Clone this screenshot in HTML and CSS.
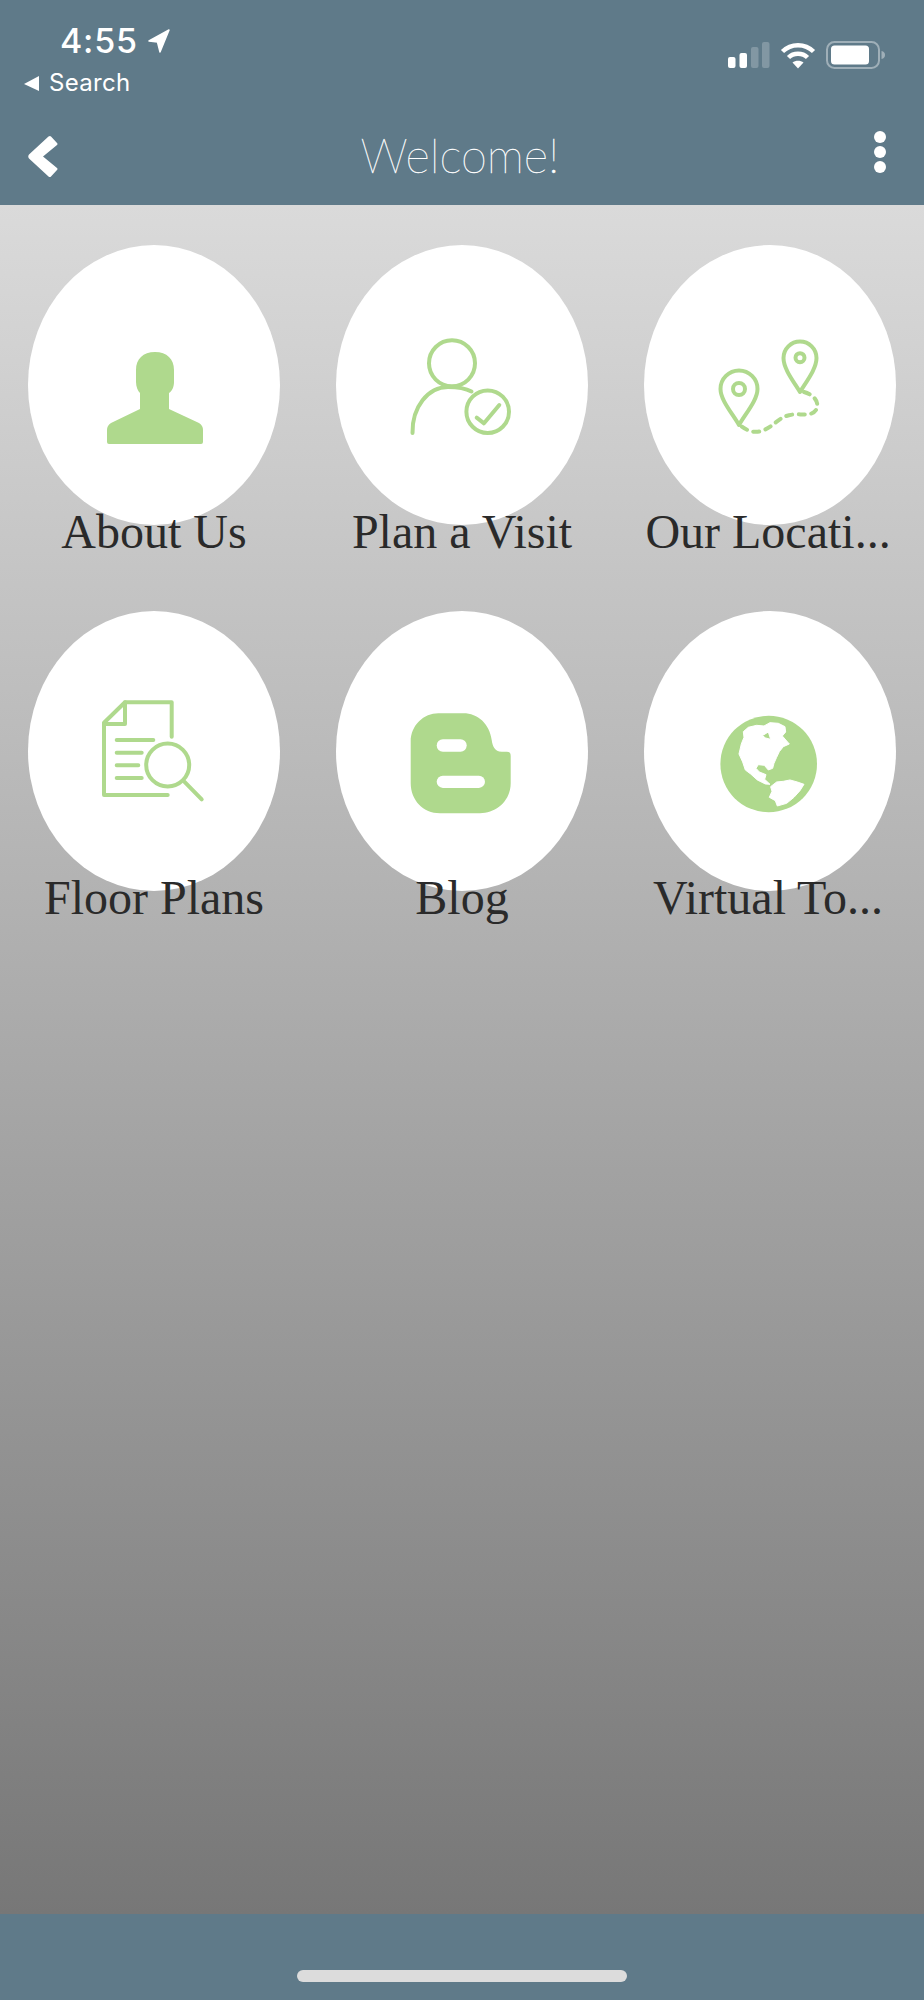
FILE: index.html
```html
<!DOCTYPE html>
<html lang="en">
<head>
<meta charset="utf-8">
<title>Welcome!</title>
<link rel="stylesheet" href="styles.css">
</head>
<body>
<div class="app">
  <header class="top">
    <div class="status">
      <div class="status-left">
        <div class="clock-row">
          <span class="clock">4:55</span>
          <svg class="loc" viewBox="0 0 22 24"><path d="M1 12 21 1 12 23 9.500 13Z"/></svg>
        </div>
        <div class="search-row">
          <svg class="back-tri" viewBox="0 0 15 15"><path d="M0 8 15 0V15Z"/></svg>
          <span class="search">Search</span>
        </div>
      </div>
      <div class="status-right">
        <svg class="signal" viewBox="0 0 42 26">
          <rect class="on" x="0" y="15" width="7.500" height="11" rx="2"/>
          <rect class="on" x="11.500" y="11" width="7.500" height="15" rx="2"/>
          <rect class="off" x="23" y="5" width="7.500" height="21" rx="2"/>
          <rect class="off" x="34" y="0" width="7.500" height="26" rx="2"/>
        </svg>
        <svg class="wifi" viewBox="0 0 36 28">
          <path class="wave" d="M2.500 10.500C11 2 25 2 33.500 10.500"/>
          <path class="wave" d="M8.500 16.500C13.500 11.500 22.500 11.500 27.500 16.500"/>
          <path class="tip" d="M12.500 21.500C15.500 19 20.500 19 23.500 21.500L18 27.500Z"/>
        </svg>
        <svg class="battery" viewBox="0 0 60 28">
          <rect class="shell" x="1" y="1" width="52" height="26" rx="7.500"/>
          <rect class="fill" x="5" y="4.500" width="38" height="19" rx="3.500"/>
          <path class="nub" d="M55.500 10C58 10.500 59 12 59 14S58 17.500 55.500 18Z"/>
        </svg>
      </div>
    </div>
    <nav class="nav">
      <svg class="chev" viewBox="0 0 30 43"><path d="M1 19.500 20.500 1.500Q22 .5 23 1.500L29 8Q30 9 29 10L15 21.500 29 33Q30 34 29 35L23 41.500Q22 42.500 20.500 41.500L1 23.500Q-.5 21.500 1 19.500Z"/></svg>
      <h1 class="title">Welcome!</h1>
      <div class="dots"><i></i><i></i><i></i></div>
    </nav>
  </header>

  <main class="grid">
    <a class="cell">
      <div class="disc">
        <svg class="art" viewBox="0 0 252 280">
          <path class="solid" d="M127 107C115 107 108 114 108 125V137C108 142 110 146 112 148V164L83 178C80 180 79 182 79 185V197Q79 199 81 199H173Q175 199 175 197V185C175 182 174 180 171 178L141 164V148C144 146 146 142 146 137V125C146 114 139 107 127 107Z"/>
        </svg>
      </div>
      <span class="label">About Us</span>
    </a>
    <a class="cell">
      <div class="disc">
        <svg class="art" viewBox="0 0 252 280">
          <g class="line">
            <circle cx="116" cy="118.300" r="23"/>
            <path d="M76.500 188C76 162 92 142 112 142C121 142 129 143 135.500 146.500"/>
            <circle cx="151.700" cy="166.700" r="21.300"/>
            <path d="M140.700 172.700 148 178.300 163.300 160"/>
          </g>
        </svg>
      </div>
      <span class="label">Plan a Visit</span>
    </a>
    <a class="cell">
      <div class="disc">
        <svg class="art" viewBox="0 0 252 280">
          <g class="line">
            <path d="M95 180C88 168 76.500 155 76.500 144A18.500 18.500 0 0 1 113.500 144C113.500 155 102 168 95 180Z"/>
            <circle cx="95" cy="144" r="6"/>
            <path d="M156 147C150 137 139.500 124 139.500 113A16.500 16.500 0 0 1 172.500 113C172.500 124 162 137 156 147Z"/>
            <circle cx="156" cy="112.700" r="4.500"/>
            <path class="dash" d="M160 147C170 150 176 157 172 165C168 172 155 168 146 170C135 172 130 181 120 185C112 189 103 186 97 181"/>
          </g>
        </svg>
      </div>
      <span class="label label-long">Our Locati...</span>
    </a>
    <a class="cell">
      <div class="disc">
        <svg class="art" viewBox="0 0 252 280">
          <g class="line">
            <path d="M143.700 125.700V91.300H97L76 111.700V184H139.700"/>
            <path d="M97 91.300V113H76"/>
            <path d="M88.700 129H125.300M88.700 141.700H113.700M88.700 154.300H110.300M88.700 167H113.700"/>
            <circle cx="139.700" cy="154" r="21.500"/>
            <path d="M156.300 170.700 173.700 188.300"/>
          </g>
        </svg>
      </div>
      <span class="label">Floor Plans</span>
    </a>
    <a class="cell">
      <div class="disc">
        <svg class="art" viewBox="0 0 252 280">
          <path class="solid" d="M102.300 102.300H127.300C142 102.300 153.500 113 155.700 129C156.500 135 158.500 140.700 165.700 140.700H170.700Q174.700 140.700 174.700 145V172.300C174.700 190 160 202.300 144 202.300H104C87 202.300 74.700 189 74.700 172.300V130.700C74.700 114 88 102.300 102.300 102.300Z"/>
          <rect class="hole" x="100.700" y="128.300" width="30" height="12.400" rx="6.200"/>
          <rect class="hole" x="100.700" y="164.700" width="48.300" height="12.200" rx="6.100"/>
        </svg>
      </div>
      <span class="label">Blog</span>
    </a>
    <a class="cell">
      <div class="disc">
        <svg class="art" viewBox="0 0 252 280">
          <circle class="solid" cx="124.700" cy="153" r="48.300"/>
          <g transform="translate(-24 -11) scale(.3333)">
            <path class="land" fill-rule="evenodd" d="M370 395 385 382 410 376 432 378 450 368 475 370 495 380 497 396 487 408 508 432 490 440 478 455 470 472 462 490 458 505 445 510 433 496 415 494 408 505 418 516 438 524 434 538 450 553 436 552 412 540 392 522 376 510 368 486 357 462 364 432 372 412ZM427 407 445 396 452 418 437 414Z"/>
            <path class="land" d="M452 560 470 546 490 544 510 540 532 546 552 553 540 572 522 592 500 610 472 618 466 602 448 592 456 574Z"/>
          </g>
        </svg>
      </div>
      <span class="label label-long">Virtual To...</span>
    </a>
  </main>

  <footer class="bottom"><div class="home"></div></footer>
</div>
</body>
</html>
```

FILE: styles.css
```css
* { box-sizing: border-box; }
html, body { margin: 0; padding: 0; }
body { width: 924px; height: 2000px; font-family: "Liberation Serif", serif; }
.app { display: flex; flex-direction: column; width: 924px; height: 2000px; }

.top { height: 205px; background: #5f7a89; color: #fff; flex: none; }
.status { height: 111px; display: flex; justify-content: space-between; }
.status-left { padding: 22px 0 0 24px; }
.clock-row { display: flex; align-items: center; height: 38px; padding-left: 36px; }
.clock { font: 500 34px/38px Inter, sans-serif; letter-spacing: .8px; }
.loc { width: 22px; height: 24px; margin-left: 10px; fill: #fff; stroke: #fff; stroke-width: 1.500; stroke-linejoin: round; }
.search-row { display: flex; align-items: center; height: 30px; margin-top: 8px; }
.back-tri { width: 15px; height: 15px; fill: #fff; }
.search { font: 400 24px/30px Inter, sans-serif; margin-left: 10px; letter-spacing: .3px; }
.status-right { display: flex; align-items: flex-start; padding: 41px 38px 0 0; }
.signal { width: 42px; height: 26px; margin: 1px 10px 0 0; }
.signal .on { fill: #fff; }
.signal .off { fill: rgba(255, 255, 255, .22); }
.wifi { width: 36px; height: 28px; margin-right: 10px; }
.wave { fill: none; stroke: #fff; stroke-width: 4.500; }
.tip { fill: #fff; }
.battery { width: 60px; height: 28px; }
.shell { fill: none; stroke: rgba(255, 255, 255, .4); stroke-width: 2; }
.fill { fill: #fff; }
.nub { fill: rgba(255, 255, 255, .4); }

.nav { height: 94px; display: grid; grid-template-columns: 1fr auto 1fr; align-items: center; padding: 0 38px 0 28px; }
.chev { width: 30px; height: 43px; fill: #fff; margin-top: -4px; }
.title { margin: -6px 0 0 6px; font: 100 47px/60px Lato, sans-serif; color: #fff; -webkit-text-stroke: .35px #fff; }
.dots { justify-self: end; display: flex; flex-direction: column; gap: 3px; margin-top: -12px; }
.dots i { display: block; width: 12px; height: 12px; border-radius: 50%; background: #fff; }

.grid { flex: 1; display: grid; grid-template-columns: repeat(3, 308px); grid-auto-rows: 366px; align-content: start; padding-top: 40px; background: linear-gradient(#dadada, #777777); }
.cell { display: flex; flex-direction: column; align-items: center; }
.disc { width: 252px; height: 280px; border-radius: 50%; background: #fff; flex: none; }
.art { display: block; width: 252px; height: 280px; }
.solid { fill: #afd98d; }
.hole { fill: #fff; }
.land { fill: #fff; stroke: #fff; stroke-width: 3; stroke-linejoin: round; }
.line { fill: none; stroke: #afd98d; stroke-width: 4; stroke-linecap: round; stroke-linejoin: round; }
.dash { stroke-dasharray: 6 6.500; }
.label { margin-top: -21px; font-size: 48px; line-height: 56px; color: #2a2a2a; white-space: nowrap; position: relative; }
.label-long { margin-left: -4px; }

.bottom { height: 86px; flex: none; background: #5f7a89; padding-top: 56px; }
.home { width: 330px; height: 12px; margin: 0 auto; border-radius: 6px; background: #dcdcdc; }
```
